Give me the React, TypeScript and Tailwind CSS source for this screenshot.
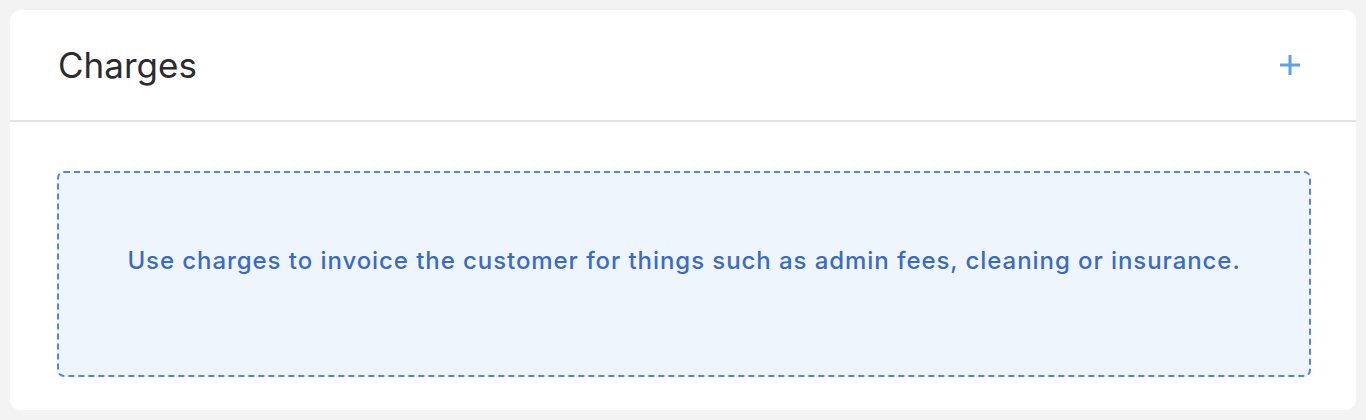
export default function App() {
  return (
    <div className="min-h-[420px] bg-[#f3f3f3] p-[10px] font-['Inter',sans-serif]">
      <div className="rounded-[10px] bg-white">
        <div className="flex h-[112px] items-center justify-between border-b-2 border-[#e2e2e2] pl-[48px] pr-[55px]">
          <h2 className="text-[35px] font-normal text-[#2b2b30]">Charges</h2>
          <button className="text-[#5a9ff0]">
            <svg width="22" height="22" viewBox="0 0 22 22" fill="none" stroke="currentColor" strokeWidth="3">
              <path d="M11 1v20M1 11h20" />
            </svg>
          </button>
        </div>
        <div className="pl-[47px] pr-[45px] pt-[49px] pb-[33px]">
          <div className="flex h-[206px] items-center justify-center rounded-[7px] border-2 border-dashed border-[#4f86e8] bg-[#eff5fd] pb-[26px]">
            <p className="text-[24px] font-medium tracking-[0.93px] text-[#3a6bc4]">
              Use charges to invoice the customer for things such as admin fees, cleaning or insurance.
            </p>
          </div>
        </div>
      </div>
    </div>
  )
}
